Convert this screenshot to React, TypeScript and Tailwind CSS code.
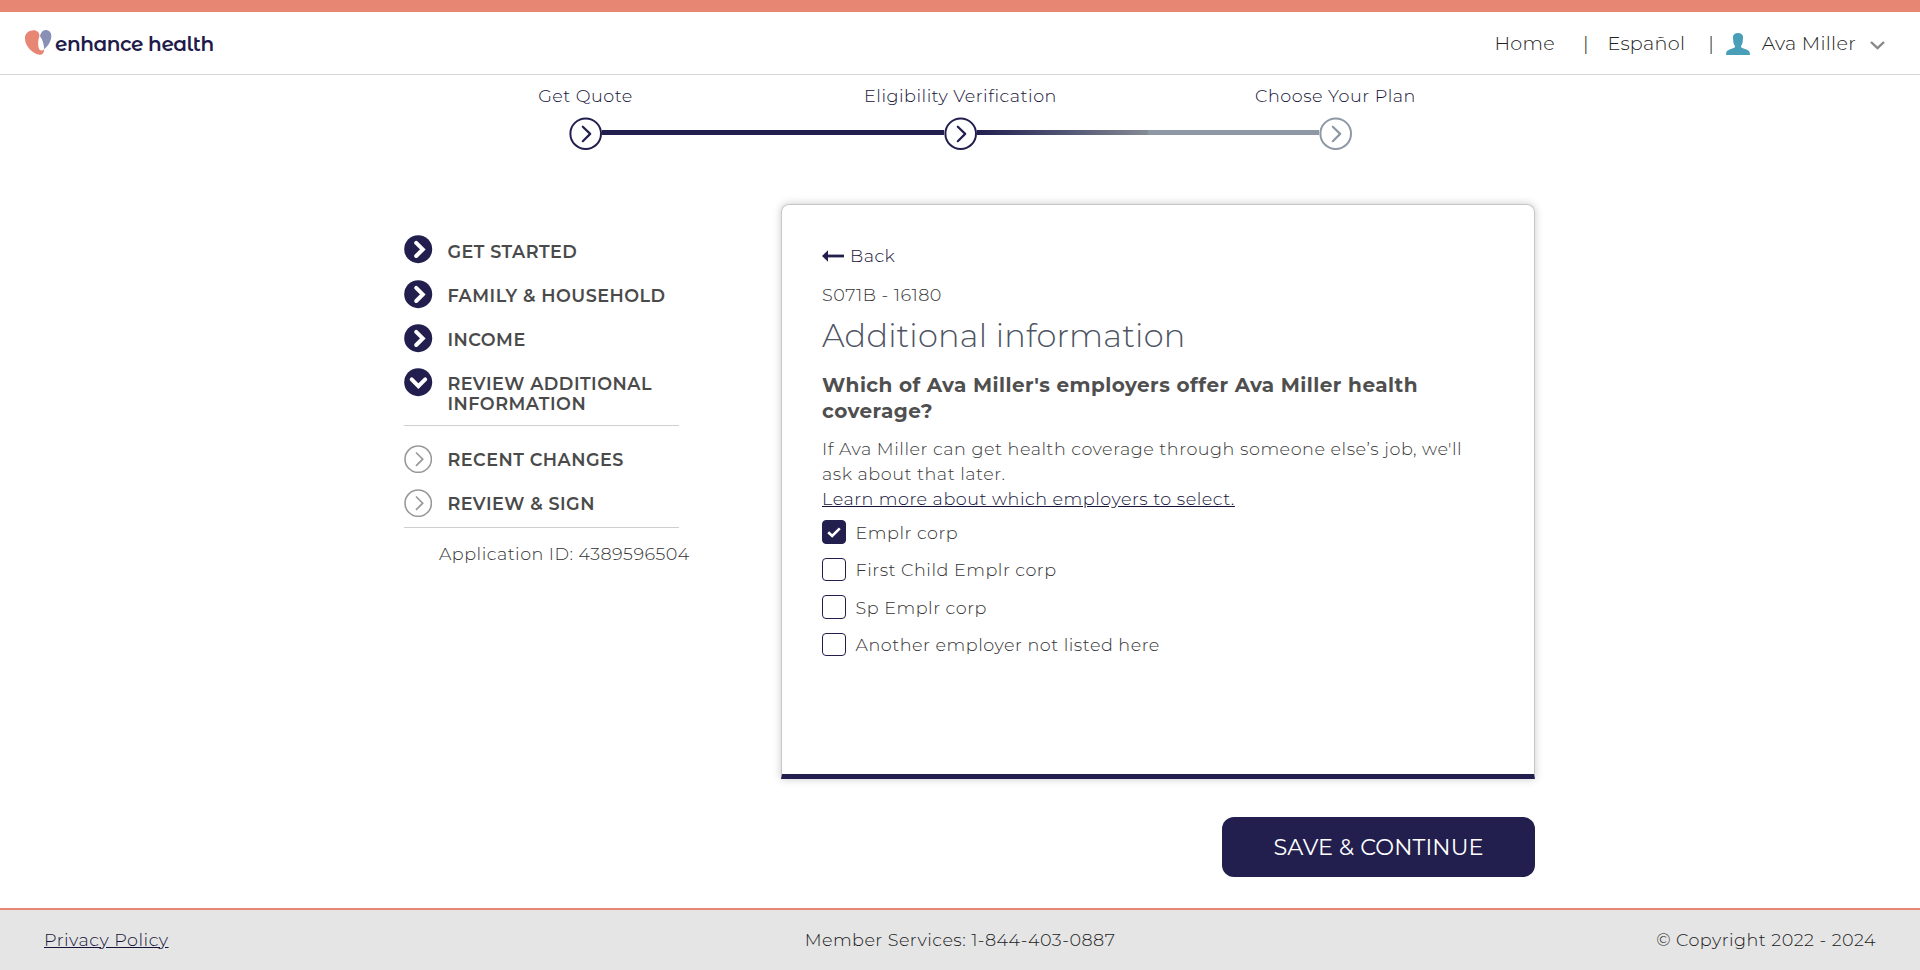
import type { ReactNode } from "react";

const FONT = "font-['Montserrat','Inter',sans-serif]";

function StepIcon({ muted }: { muted?: boolean }) {
  return (
    <svg className={`block size-[33px] shrink-0 ${muted ? "text-[#8e98a5]" : "text-[#221f4f]"}`} viewBox="0 0 33 33" fill="none" stroke="currentColor">
      <circle cx="16.7" cy="16.7" r="15.3" strokeWidth="2" />
      <path d="M13.8 9.7 L21.2 16.9 L13.8 24.2" strokeWidth="2.2" strokeLinecap="round" strokeLinejoin="round" />
    </svg>
  );
}

function NavIcon({ kind }: { kind: "done" | "open" | "todo" }) {
  if (kind === "todo") {
    return (
      <svg className="block size-7 shrink-0" viewBox="0 0 28 28" fill="none" stroke="#999999">
        <circle cx="14.2" cy="14.2" r="13.2" strokeWidth="1.6" />
        <path d="M12 7.5 L18.7 14.2 L12 20.9" strokeWidth="1.7" />
      </svg>
    );
  }
  return (
    <svg className="block size-7 shrink-0 overflow-visible" viewBox="0 0 28 28" fill="none">
      <circle cx="14.2" cy="14.2" r="14" fill="#221f4f" />
      <path
        d={kind === "open" ? "M7.7 11.4 L14.4 18.2 L21.2 11.4" : "M12.2 7.9 L18.8 14.4 L12.2 21"}
        stroke="#ffffff"
        strokeWidth="4"
        strokeLinecap="round"
        strokeLinejoin="miter"
      />
    </svg>
  );
}

function NavItem({ kind, first, children }: { kind: "done" | "open" | "todo"; first?: boolean; children: ReactNode }) {
  const offset = first ? "pt-[7px]" : kind === "todo" ? "pt-[5px]" : "pt-[6px]";
  return (
    <div className="flex items-start gap-[15.4px]">
      <NavIcon kind={kind} />
      <div className={`${offset} text-[17.6px] leading-5 font-semibold tracking-[0.5px] text-[#4a4a4a]`}>{children}</div>
    </div>
  );
}

function Option({ checked, children }: { checked?: boolean; children: ReactNode }) {
  return (
    <label className="flex h-[37.4px] items-start">
      <span
        className={`mt-[0.35px] flex h-[23.5px] w-6 items-center justify-center rounded-[4px] border border-[#221f4f] ${checked ? "bg-[#221f4f]" : "bg-white"}`}
      >
        {checked && (
          <svg className="size-4" viewBox="0 0 16 16" fill="none">
            <path d="M2.2 8.2 L6.2 12 L13.8 4.4" stroke="#ffffff" strokeWidth="2.6" />
          </svg>
        )}
      </span>
      <span className="ml-[9.6px] pt-px text-[17.6px] leading-6 text-[#333333]">{children}</span>
    </label>
  );
}

export default function App() {
  return (
    <div className={`flex h-[970px] w-full flex-col overflow-hidden bg-white font-light tracking-[0.5px] ${FONT}`}>
      <div className="h-3 bg-[#e78672]" />
      <header className="flex h-[63px] items-center justify-between border-b border-[#d8d8d8] pr-[35px] pl-[25px]">
        <div className="flex items-center">
          <svg className="-mt-px block h-[25px] w-[27px]" viewBox="0 0 27 25">
            <path d="M7.2 0.4 C11.5 -0.3 14.3 2 14.5 6 C13.2 9.5 12.6 14.5 13.8 18.2 C14.5 20.6 17.4 21.2 18.9 19.2 C19.6 22 17.9 24.8 14.8 24.7 C7.8 23.8 0 16.2 0 8.4 C0 3.6 2.7 0.9 7.2 0.4 Z" fill="#e78672" />
            <path d="M15 6.2 C15.8 1.8 18.6 -0.2 21.6 0.1 C25 0.5 26.6 3.4 26.3 7 C25.9 12 22.6 16.3 19.1 19.3 C19.1 14.3 17.6 9.5 15 6.2 Z" fill="#8890b5" />
          </svg>
          <span className="mt-[2px] ml-[3px] font-['Montserrat_Alternates','Montserrat','Inter',sans-serif] text-[20px] leading-6 font-semibold tracking-[-0.47px] text-[#1f1b4b]">enhance health</span>
        </div>
        <nav className="flex items-center text-[19.2px] leading-6 tracking-[0.3px] text-[#222222]">
          <span>Home</span>
          <span className="ml-[28px]">|</span>
          <span className="ml-[18.5px]">Español</span>
          <span className="ml-[23px]">|</span>
          <svg className="mt-[2px] ml-[12px] block h-[22px] w-6" viewBox="0 0 24 22">
            <path d="M12 0 C15.2 0 17 1.5 17.1 4.5 L16.6 9.5 C16.4 11.4 15 12.2 15 14 C15.5 15.6 22.5 16 23.6 19 L24 22 L0 22 L0.4 19 C1.5 16 8.5 15.6 9 14 C9 12.2 7.6 11.4 7.4 9.5 L6.9 4.5 C7 1.5 8.8 0 12 0 Z" fill="#4a9fb8" />
          </svg>
          <span className="ml-[11.5px]">Ava Miller</span>
          <svg className="mt-1 ml-[14px] block h-[9px] w-[15px]" viewBox="0 0 15 9" fill="none">
            <path d="M1 1 L7.5 7.2 L14 1" stroke="#888888" strokeWidth="2.4" />
          </svg>
        </nav>
      </header>

      <div className="ml-[398px] w-[1125px] pt-2">
        <div className="grid grid-cols-3 text-center text-[17.6px] leading-[25px] text-[#151338]">
          <span>Get Quote</span>
          <span>Eligibility Verification</span>
          <span>Choose Your Plan</span>
        </div>
        <div className="mx-[171px] mt-[9px] flex h-[33px] items-center">
          <StepIcon />
          <div className="mt-[-2px] h-[5px] flex-1 bg-[#221f4f]" />
          <StepIcon />
          <div className="mt-[-2px] flex h-[5px] flex-1">
            <div className="flex-1 bg-linear-to-r from-[#221f4f] to-[#858b94]" />
            <div className="flex-1 bg-[#8e98a5]" />
          </div>
          <StepIcon muted />
        </div>
      </div>

      <main className="flex h-[758px] pt-[54px] pl-[404px]">
        <aside className="w-[377px] pt-[31px]">
          <div className="w-[275px] border-b border-[#cfcfcf] pb-[11px]">
            <div className="flex flex-col">
              <div className="h-[45px]"><NavItem kind="done" first>GET STARTED</NavItem></div>
              <div className="h-11"><NavItem kind="done">FAMILY &amp; HOUSEHOLD</NavItem></div>
              <div className="h-11"><NavItem kind="done">INCOME</NavItem></div>
              <NavItem kind="open">REVIEW ADDITIONAL INFORMATION</NavItem>
            </div>
          </div>
          <div className="flex w-[275px] flex-col gap-4 border-b border-[#cfcfcf] pt-[19px] pb-[10px]">
            <NavItem kind="todo">RECENT CHANGES</NavItem>
            <NavItem kind="todo">REVIEW &amp; SIGN</NavItem>
          </div>
          <p className="mt-[13px] pl-[35px] text-[17.6px] leading-[25px] tracking-[0.47px] text-[#333333]">Application ID: 4389596504</p>
        </aside>

        <div className="flex w-[754px] flex-col">
          <section className="h-[575px] rounded-t-[8px] border border-b-[5px] border-[#c6c6c6] border-b-[#221f4f] px-10 pt-[39px] shadow-[0_0_8px_rgba(0,0,0,0.22)]">
            <div className="flex h-[25px] items-center text-[17.6px] text-[#151338]">
              <svg className="-mt-px block h-3 w-[22px]" viewBox="0 0 22 12" fill="#221f4f">
                <path d="M0 6 L6 0.2 V11.8 Z" />
                <rect x="5" y="4.6" width="17" height="2.8" />
              </svg>
              <span className="ml-[6px]">Back</span>
            </div>
            <div className="mt-[13px] text-[17.6px] leading-[25px] text-[#333333]">S071B - 16180</div>
            <h1 className="mt-[11px] text-[32px] leading-[35px] tracking-[0.22px] text-[#4d5462]">Additional information</h1>
            <h2 className="mt-[19px] text-[20px] leading-[26px] font-bold tracking-[0.46px] text-[#4f4f4f]">
              Which of Ava Miller's employers offer Ava Miller health coverage?
            </h2>
            <div className="mt-[12px] text-[17.6px] leading-[25px] text-[#3a3a3a]">
              <p className="tracking-[0.52px]">If Ava Miller can get health coverage through someone else’s job, we'll ask about that later.</p>
              <a className="text-[#151338] underline">Learn more about which employers to select.</a>
            </div>
            <div className="mt-[9px] flex flex-col">
              <Option checked>Emplr corp</Option>
              <Option>First Child Emplr corp</Option>
              <Option>Sp Emplr corp</Option>
              <Option>Another employer not listed here</Option>
            </div>
          </section>
          <button className="mt-[38px] h-[60px] w-[313px] self-end rounded-[12px] bg-[#221f4f] pt-[2px] text-[22.4px] font-normal tracking-[0.1px] text-white">
            SAVE &amp; CONTINUE
          </button>
        </div>
      </main>

      <footer className="grid h-[62px] grid-cols-3 items-center border-t-2 border-[#e78672] bg-[#e5e5e5] px-11 pb-[2px] text-[17.6px] leading-[25px] text-[#1a1a1a]">
        <a className="text-[#151338] underline">Privacy Policy</a>
        <span className="text-center tracking-[0.46px]">Member Services: 1-844-403-0887</span>
        <span className="text-right tracking-[0.48px]">© Copyright 2022 - 2024</span>
      </footer>
    </div>
  );
}
